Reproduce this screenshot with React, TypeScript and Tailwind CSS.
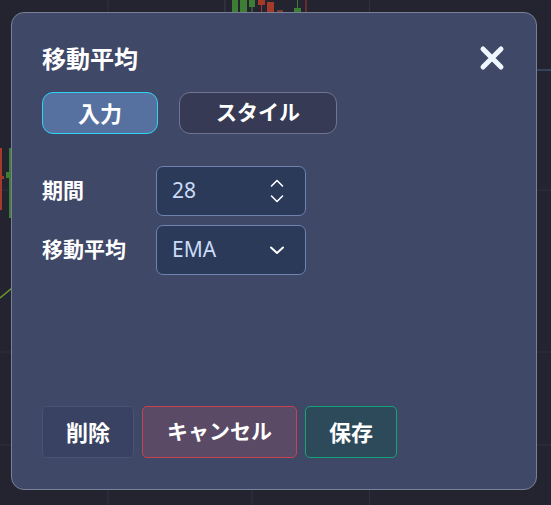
import React from "react";

function ChartBackdrop() {
  return (
    <svg className="absolute inset-0" width="551" height="505" viewBox="0 0 551 505">
      <rect width="551" height="505" fill="#23242f" />
      {/* grid */}
      <g stroke="#2f3240" strokeWidth="1">
        <line x1="108" y1="0" x2="108" y2="505" />
        <line x1="252" y1="0" x2="252" y2="505" />
        <line x1="369.5" y1="0" x2="369.5" y2="505" />
        <line x1="0" y1="190" x2="551" y2="190" />
        <line x1="0" y1="352" x2="551" y2="352" />
        <line x1="0" y1="445" x2="551" y2="445" />
      </g>
      <line x1="536" y1="70" x2="551" y2="70" stroke="#3a4f6a" strokeWidth="1.5" />
      {/* candles peeking above the dialog */}
      <line x1="225" y1="0" x2="225" y2="14" stroke="#3a3d4d" />
      <rect x="232" y="0" width="6" height="14" fill="#3d7d34" />
      <rect x="240" y="0" width="7" height="14" fill="#3d7d34" />
      <line x1="252" y1="0" x2="252" y2="14" stroke="#3d7d34" />
      <rect x="249" y="0" width="6" height="7" fill="#3d7d34" />
      <rect x="258" y="0" width="7" height="5" fill="#a63a2a" />
      <line x1="261.5" y1="5" x2="261.5" y2="14" stroke="#a63a2a" />
      <rect x="267" y="2" width="7" height="12" fill="#a63a2a" />
      <rect x="277" y="10" width="6" height="4" fill="#7a3a34" />
      <line x1="297.5" y1="0" x2="297.5" y2="14" stroke="#3d7d34" />
      <rect x="294" y="8" width="7" height="6" fill="#3d7d34" />
      <line x1="306" y1="0" x2="306" y2="14" stroke="#a63a2a" />
      {/* candles at left edge */}
      <rect x="0" y="148" width="2" height="62" fill="#a63a2a" />
      <rect x="0" y="176" width="4" height="3" fill="#a63a2a" />
      <rect x="9" y="148" width="2" height="70" fill="#3d7d34" />
      <rect x="6" y="172" width="5" height="6" fill="#3d7d34" />
      <polyline points="0,298 6,293 12,288" fill="none" stroke="#6e9a2e" strokeWidth="1.5" />
    </svg>
  );
}

function CloseIcon() {
  return (
    <svg width="26" height="26" viewBox="0 0 26 26">
      <path d="M4 4L22 22M22 4L4 22" stroke="#eef6ff" strokeWidth="5" strokeLinecap="round" />
    </svg>
  );
}

function Spinner() {
  return (
    <svg width="16" height="28" viewBox="0 0 16 28" fill="none" stroke="#ffffff" strokeWidth="1.6" strokeLinecap="round" strokeLinejoin="round">
      <path d="M2.5 9L8 3.5L13.5 9" />
      <path d="M2.5 19L8 24.5L13.5 19" />
    </svg>
  );
}

function Chevron() {
  return (
    <svg width="16" height="10" viewBox="0 0 16 10" fill="none" stroke="#ffffff" strokeWidth="2" strokeLinecap="round" strokeLinejoin="round">
      <path d="M2 2.5L8 8L14 2.5" />
    </svg>
  );
}

export default function App() {
  return (
    <div
      className="relative h-[505px] w-[551px] overflow-hidden pl-[11px] pt-[12px]"
      style={{ fontFamily: '"Noto Sans", "Noto Sans CJK JP", sans-serif' }}
    >
      <ChartBackdrop />
      <div className="relative flex h-[478px] w-[526px] flex-col rounded-[13px] border border-[#7a8098] bg-[#404867] px-[30px] pt-[28px] pb-[31px] text-white">
        <div className="flex items-center justify-between">
          <h1 className="text-[24px] leading-[36px] font-bold">移動平均</h1>
          <button className="mr-[1px] mt-[-3px]" aria-label="閉じる">
            <CloseIcon />
          </button>
        </div>

        <div className="mt-[15px] flex gap-[21px]">
          <button className="h-[42px] w-[116px] rounded-[11px] border border-[#2fd4f2] bg-[#5671a0] text-[22px] font-bold">
            入力
          </button>
          <button className="h-[42px] w-[158px] rounded-[11px] border border-[#6f7590] bg-[#363a54] text-[21px] font-bold">
            スタイル
          </button>
        </div>

        <div className="mt-[32px] flex flex-col gap-[9px]">
          <div className="flex items-center">
            <span className="w-[114px] text-[21px] font-bold">期間</span>
            <div className="flex h-[50px] w-[150px] items-center justify-between rounded-[7px] border border-[#6f82b0] bg-[#2c3a5a] pl-[15px] pr-[20px]">
              <span className="text-[21px] text-[#c9dcf7]">28</span>
              <Spinner />
            </div>
          </div>
          <div className="flex items-center">
            <span className="w-[114px] text-[21px] font-bold">移動平均</span>
            <div className="flex h-[50px] w-[150px] items-center justify-between rounded-[7px] border border-[#6f82b0] bg-[#2c3a5a] pl-[15px] pr-[20px]">
              <span className="text-[21px] text-[#c9dcf7]">EMA</span>
              <Chevron />
            </div>
          </div>
        </div>

        <div className="mt-auto flex gap-[8px]">
          <button className="h-[52px] w-[92px] rounded-[5px] border border-[#4a5371] bg-[#394262] text-[22px] font-bold">
            削除
          </button>
          <button className="h-[52px] w-[155px] rounded-[5px] border border-[#c8434f] bg-[#5a4a66] text-[21px] font-bold">
            キャンセル
          </button>
          <button className="h-[52px] w-[92px] rounded-[5px] border border-[#14a477] bg-[#2d4a5a] text-[22px] font-bold">
            保存
          </button>
        </div>
      </div>
    </div>
  );
}
